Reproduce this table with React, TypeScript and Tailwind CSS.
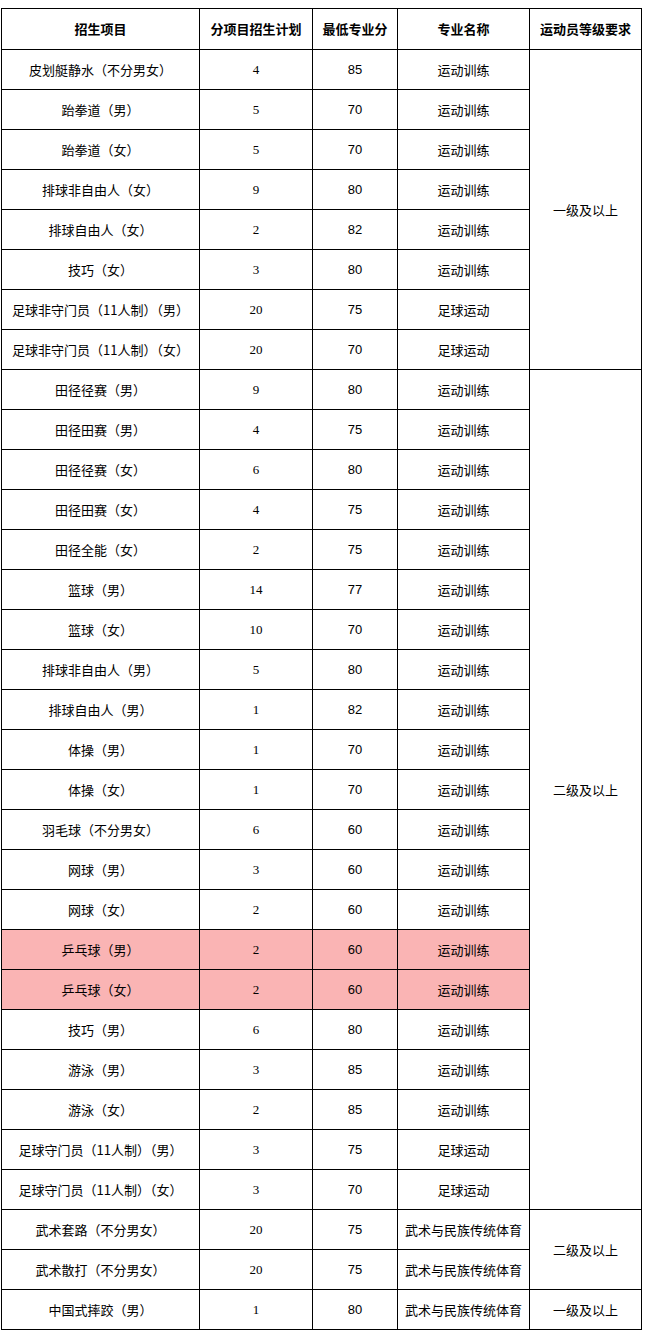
const rows: [string, string, string, string, boolean?][] = [
  ['皮划艇静水（不分男女）', '4', '85', '运动训练'],
  ['跆拳道（男）', '5', '70', '运动训练'],
  ['跆拳道（女）', '5', '70', '运动训练'],
  ['排球非自由人（女）', '9', '80', '运动训练'],
  ['排球自由人（女）', '2', '82', '运动训练'],
  ['技巧（女）', '3', '80', '运动训练'],
  ['足球非守门员（11人制）（男）', '20', '75', '足球运动'],
  ['足球非守门员（11人制）（女）', '20', '70', '足球运动'],
  ['田径径赛（男）', '9', '80', '运动训练'],
  ['田径田赛（男）', '4', '75', '运动训练'],
  ['田径径赛（女）', '6', '80', '运动训练'],
  ['田径田赛（女）', '4', '75', '运动训练'],
  ['田径全能（女）', '2', '75', '运动训练'],
  ['篮球（男）', '14', '77', '运动训练'],
  ['篮球（女）', '10', '70', '运动训练'],
  ['排球非自由人（男）', '5', '80', '运动训练'],
  ['排球自由人（男）', '1', '82', '运动训练'],
  ['体操（男）', '1', '70', '运动训练'],
  ['体操（女）', '1', '70', '运动训练'],
  ['羽毛球（不分男女）', '6', '60', '运动训练'],
  ['网球（男）', '3', '60', '运动训练'],
  ['网球（女）', '2', '60', '运动训练'],
  ['乒乓球（男）', '2', '60', '运动训练', true],
  ['乒乓球（女）', '2', '60', '运动训练', true],
  ['技巧（男）', '6', '80', '运动训练'],
  ['游泳（男）', '3', '85', '运动训练'],
  ['游泳（女）', '2', '85', '运动训练'],
  ['足球守门员（11人制）（男）', '3', '75', '足球运动'],
  ['足球守门员（11人制）（女）', '3', '70', '足球运动'],
  ['武术套路（不分男女）', '20', '75', '武术与民族传统体育'],
  ['武术散打（不分男女）', '20', '75', '武术与民族传统体育'],
  ['中国式摔跤（男）', '1', '80', '武术与民族传统体育'],
]

// level column merges: start index -> [rowSpan, label]
const levels: Record<number, [number, string]> = {
  0: [8, '一级及以上'],
  8: [21, '二级及以上'],
  29: [2, '二级及以上'],
  31: [1, '一级及以上'],
}

const cell = 'border border-black text-center align-middle p-0'

export default function App() {
  return (
    <div className="bg-white min-h-[1340px] pt-2 pl-px font-['Noto_Sans_CJK_SC',sans-serif] text-[13px] text-black">
      <table className="table-fixed border-collapse w-[641px]">
        <colgroup>
          <col className="w-[198px]" />
          <col className="w-[113px]" />
          <col className="w-[85px]" />
          <col className="w-[132px]" />
          <col className="w-[112px]" />
        </colgroup>
        <thead>
          <tr className="h-[41px] font-bold">
            <th className={cell}>招生项目</th>
            <th className={cell}>分项目招生计划</th>
            <th className={cell}>最低专业分</th>
            <th className={cell}>专业名称</th>
            <th className={cell}>运动员等级要求</th>
          </tr>
        </thead>
        <tbody>
          {rows.map(([name, plan, score, major, hl], i) => (
            <tr key={i} className="h-10">
              <td className={`${cell} ${hl ? 'bg-[#fab4b4]' : ''}`}>{name}</td>
              <td className={`${cell} font-['Liberation_Serif',serif] ${hl ? 'bg-[#fab4b4]' : ''}`}>{plan}</td>
              <td className={`${cell} font-['Liberation_Sans',sans-serif] ${hl ? 'bg-[#fab4b4]' : ''}`}>{score}</td>
              <td className={`${cell} ${hl ? 'bg-[#fab4b4]' : ''}`}>{major}</td>
              {levels[i] && (
                <td className={cell} rowSpan={levels[i][0]}>
                  {levels[i][1]}
                </td>
              )}
            </tr>
          ))}
        </tbody>
      </table>
    </div>
  )
}
